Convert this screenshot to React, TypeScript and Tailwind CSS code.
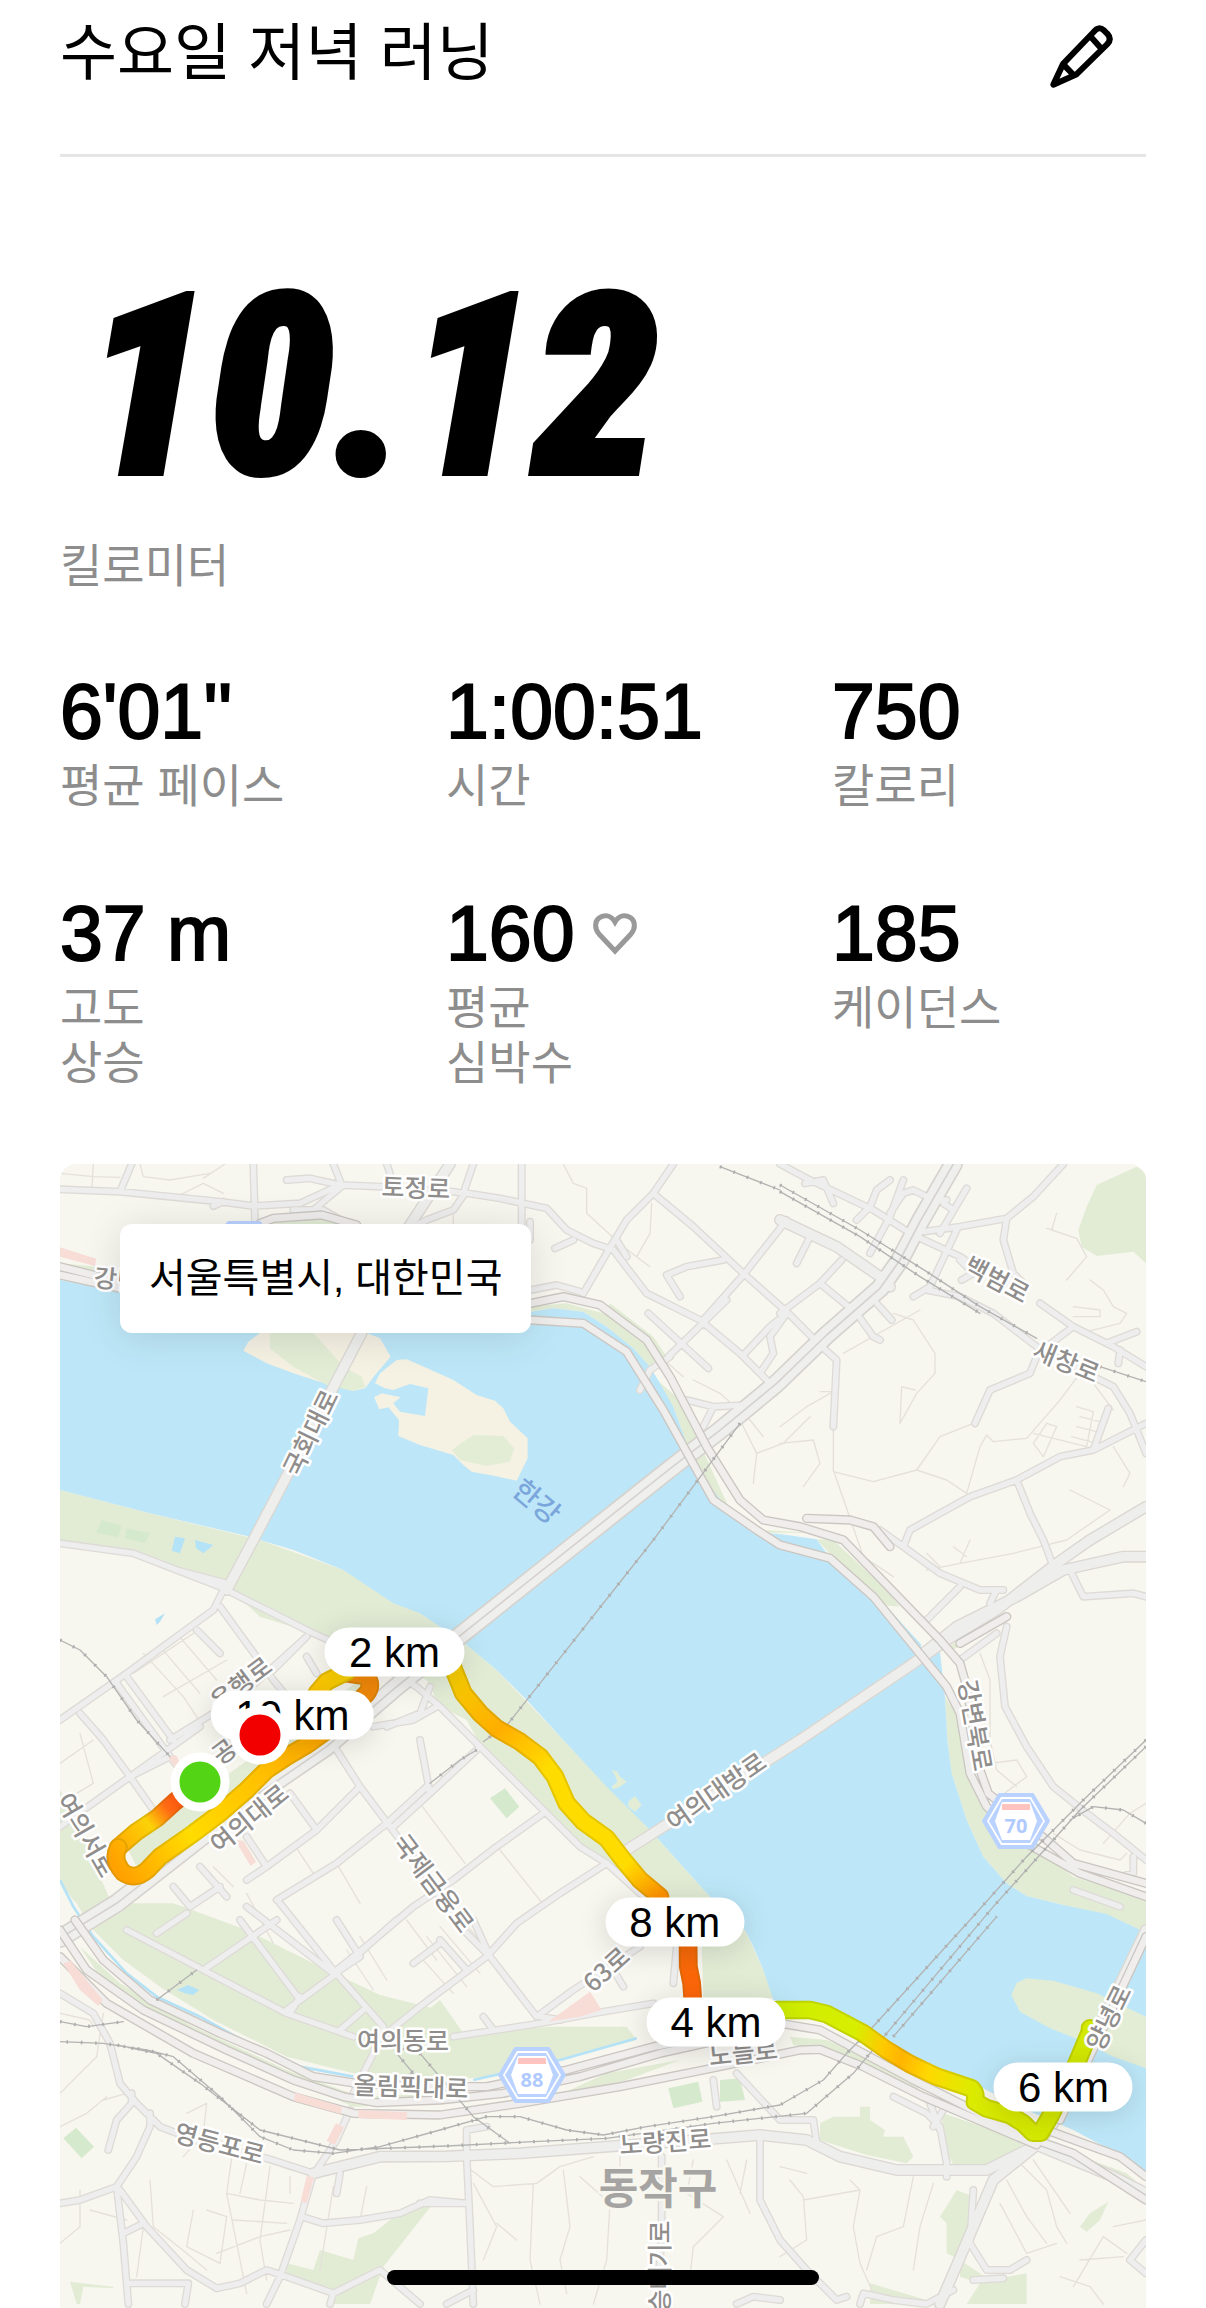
type Stat = { value: string; label: string[]; heart?: boolean };

const stats: Stat[] = [
  { value: "6'01''", label: ["평균 페이스"] },
  { value: "1:00:51", label: ["시간"] },
  { value: "750", label: ["칼로리"] },
  { value: "37 m", label: ["고도", "상승"] },
  { value: "160", label: ["평균", "심박수"], heart: true },
  { value: "185", label: ["케이던스"] },
];

const KR = "font-['Liberation_Sans','Noto_Sans_CJK_KR',sans-serif]";

// Map shapes are in thirds of a pixel, labels in whole pixels.
const water = [
  "M0 360L180 392L800 470L1413 455L1480 445L1570 455L1640 500L1720 565L1770 620L1800 670L1840 740L1880 850L1930 960L1960 1010L2020 1060L2100 1118L2160 1122L2270 1138L2300 1180L2390 1270L2460 1335L2585 1462L2640 1475L2655 1610L2662 1740L2675 1840L2720 1980L2770 2090L2840 2170L2900 2208L3010 2235L3140 2262L3258 2318V3050L3170 2980L3040 2910L2900 2850L2760 2780L2560 2720L2430 2630L2260 2550L2140 2520L2110 2430L2080 2360L2055 2310L1950 2210L1770 2010L1640 1880L1510 1740L1400 1620L1310 1530L1220 1455L1080 1360L1000 1330L850 1230L700 1170L600 1140L570 1130L270 1060L0 990Z",
];

const parks = [
  "M0 990L270 1060L600 1140L850 1230L1080 1360L1220 1455L1310 1530L1510 1740L1770 2010L1950 2210L2055 2310L2110 2430L2150 2515L1930 2515L1925 2350L1800 2270L1660 2130L1560 2060L1440 1930L1270 1770L1220 1680L1140 1640L1100 1560L930 1480L760 1420L600 1370L500 1280L360 1230L220 1180L0 1150Z",
  "M0 310L110 320L180 345V385L0 350Z",
  "M600 180L785 168L880 190V210H600Z",
  "M1413 455L1480 445L1570 455L1640 500L1720 565L1770 620L1820 590L1780 530L1650 430L1630 460L1520 430L1413 440Z",
  "M1780 650L1840 740L1880 850L1960 1010L2020 1060L2100 1118H2260L2100 1110L2010 1050L1860 720Z",
  "M2270 1138L2320 1140L2480 1290L2520 1340L2460 1335L2390 1270Z",
  "M2670 1475L2830 1380L2835 1372L2815 1370L2665 1460Z",
  "M2655 1610L2700 1680L2720 1820L2780 1960L2900 2040L3040 2150L3258 2220V2318L3010 2235L2900 2208L2840 2170L2770 2090L2720 1980L2675 1840L2662 1740Z",
  "M3258 40L3230 20L3110 75L3080 140L3055 210L3065 260L3110 288L3220 275L3258 310Z",
  "M2145 710L2160 640L2210 615L2190 660L2150 710Z",
  "M340 2230L560 2310L760 2410L960 2505L1140 2550L1180 2610L1100 2740H880L680 2690L460 2580L300 2480L190 2400L90 2300L50 2230Z",
  "M0 1890L40 1960L100 2100L150 2220L110 2290L40 2220L0 2170Z",
  "M1020 2620L1140 2520L1210 2620L1470 2600L1700 2600L1730 2640L1500 2700L1300 2750L1000 2770L960 2700Z",
  "M200 2060L900 1560L940 1570L880 1660L240 2140Z",
  "M60 2360L180 2470L400 2600L680 2730L900 2810L1120 2800V2830L880 2840L600 2720L260 2570L120 2450Z",
  "M1530 2790L1640 2740L1860 2700L1700 2760L1540 2800Z",
  "M2190 2630L2300 2640L2420 2690L2580 2780L2560 2800L2420 2730L2300 2680L2200 2655Z",
  "M2280 2890L2320 2870L2400 2870L2400 2840L2430 2840L2430 2880L2475 2910L2470 2930L2530 2930L2560 2990L2540 3010L2420 2985L2280 2940Z",
  "M2650 2860L2900 2945L2830 3000L2770 3020L2680 3015L2640 2930Z",
  "M2960 2950L3200 3040L3258 3090L3100 3040L2980 2980Z",
  "M2640 3170L2690 3090L2740 3110L2740 3200L2700 3300L2660 3280L2660 3190Z",
  "M2700 3300L2790 3360L2900 3340L2900 3432H2720L2760 3370L2700 3350Z",
  "M2430 3370L2600 3420V3432H2430Z",
  "M680 3310L760 3330L780 3270L880 3300L895 3235L940 3220L1040 3140L1120 3130L970 3320L930 3432H820L815 3405L680 3355Z",
  "M30 3365L160 3380V3385L70 3380L60 3432H50Z",
  "M3060 3200L3090 3160L3145 3125L3120 3180L3080 3215Z",
];

const lawns = [
  "M10 2935L48 2903L102 2960L65 2995Z",
  "M1825 2785L1915 2765L1927 2825L1840 2845Z",
  "M1980 2760L2040 2755L2055 2820L1980 2825Z",
  "M1290 1915L1335 1885L1378 1940L1340 1975Z",
  "M125 1080L185 1098L175 1132L108 1118Z",
  "M200 1105L270 1120L255 1150L195 1135Z",
];

const sands = [
  "M550 572L565 545L600 519L800 470L920 519L960 535L992 590L945 645L915 685L880 692L800 672L700 640L620 610Z",
  "M945 670L960 640L1010 600L1040 598L1080 615L1180 660L1250 705L1305 722L1330 745L1350 785L1403 835V895L1370 962L1290 945L1235 935L1210 915L1180 885L1080 855L1015 828L1017 780L985 742L958 748L942 712L965 700L1022 712L1000 730L1020 755L1095 768L1105 685L1050 672L1000 690L975 685Z",
];

const islets = [
  "M630 505L760 519L815 580L850 620L905 650L916 680L880 693L800 675L700 620L630 565Z",
  "M1175 870L1240 825L1330 828L1362 865L1350 905L1280 918L1200 900Z",
  "M2854 2505L2870 2468L2900 2455L2980 2462L3110 2500L3258 2570V2725L3160 2690L3060 2640L2970 2605L2880 2555Z",
  "M1655 1830L1672 1835L1680 1850L1700 1865L1680 1880L1660 1888L1655 1880L1672 1865L1665 1845Z",
  "M1705 1925L1725 1908L1745 1935L1725 1955L1705 1940Z",
];

const ponds = [
  "M345 1130L375 1135L360 1180L335 1172Z",
  "M405 1140L460 1155L430 1180L408 1165Z",
  "M285 1378L315 1360L300 1385L290 1395Z",
  "M350 2490L385 2475L418 2490L400 2505L375 2500Z",
];

const pinks = [
  "M0 262L108 296L105 318L0 290Z",
  "M1465 2585L1590 2495L1625 2550L1560 2570Z",
  "M10 2410L32 2402L128 2520L115 2538L60 2490Z",
  "M706 2798L846 2840L842 2862L702 2822Z",
  "M895 2850L1042 2857L1040 2880L895 2874Z",
  "M828 2890L852 2902L824 2955L800 2942Z",
  "M740 3048L762 3052L740 3130L722 3124Z",
  "M525 2040L550 2042L588 2105L572 2118Z",
  "M325 1792L348 1785L372 1830L355 1840Z",
];

const thin = [
  "M0 40L100 50L180 52M100 12L95 100M240 12L250 50L330 60L450 40M360 105L430 70L490 100M495 12L430 55",
  "M1510 12L1540 70L1580 85V160L1690 260L1770 320M1775 130L1770 220L1730 290M1180 130V200",
  "M1610 520L1690 570L1740 620M1690 320L1740 380M1790 580L1870 650M1900 660L1980 700L2070 780L2110 830",
  "M2040 780L2090 880L2170 850L2250 770M2090 880L2080 970",
  "M2160 800L2240 740L2320 695H2280M2160 850L2260 840L2280 910L2230 980",
  "M2320 800V930L2410 1190L2500 1250M2320 935L2440 965L2570 930L2640 830L2740 790M2570 930L2660 960L2720 1000L2760 860L2780 825L2800 845L2900 835L3000 720L3060 640",
  "M2500 460L2560 480L2625 580V640L2570 700L2520 790L2525 680L2565 690M2350 580L2580 450",
  "M3050 740L3100 755L3080 860L2920 820M3060 770L3140 790M3050 800L3130 820M3035 830L3110 850M2960 790L2990 800L2950 890L2920 850Z",
  "M2990 160L2975 210L3050 235L3080 290L3020 360M2960 205L2980 210M3090 360L3130 390L3160 440L3200 460L3180 490L3080 515M3040 440L3120 450V470H3040",
  "M3100 670L3160 750M3160 860L3210 940L3190 980M3030 990L3150 1050L3020 1140L2860 1180L2700 1210L2600 1230",
  "M2700 1210L2730 1140M2600 1180L2640 1220M2680 1160L2720 1190",
  "M2790 1810L2870 1800L2900 1850L2820 1910M2760 1480L2790 1560V1740L2810 1830L2870 1880",
  "M2980 2020L3060 2070L3180 2100L3200 2080M3130 2050L3210 1960L3258 1930",
  "M250 1480L370 1610L430 1700M300 1460L420 1600M350 1420L470 1560M220 1540L400 1420M310 1610L500 1500",
  "M0 1930L100 1870L60 1720M0 1810L100 1740M560 2200L640 2350M700 2050L760 2140",
  "M0 2800L60 2740L110 2690L130 2560M140 2810L80 2860L0 2900M130 2820L200 2800",
  "M60 3090V3200L0 3250M90 3150L200 3180M250 3200L230 3350M270 3060L280 3200L380 3280L440 3330",
  "M380 2860L440 2830L430 2920L370 2990M430 2920L520 2960L600 2990L690 3030M520 2960L500 3100L530 3250L560 3400",
  "M500 3100L600 3120L700 3130M520 3180L680 3190M440 3150L500 3170L480 3310L380 3260L400 3150M470 3280L600 3230L690 3210",
  "M560 3010L540 3100M630 3020L600 3240L620 3360M690 3050V3100M820 3080L780 3330M920 3080L900 3180",
  "M1220 3020L1300 3080L1430 3070L1500 3020L1600 2990M1420 3070L1410 3300L1440 3432M1510 3030L1530 3200L1500 3300L1520 3400",
  "M1560 3050L1650 3130L1640 3300L1600 3432M1680 2980V3040M1240 3070L1310 3200L1270 3300M1310 3190L1370 3240",
  "M1900 3000L1880 3100L1990 3170L1900 3260L1890 3350M2000 3000L2070 3160M2060 3000L2040 3100",
  "M2160 3020L2240 3040M2190 3060L2230 3110L2240 3240L2160 3290M2230 3120L2400 3090L2380 3200L2400 3310L2440 3400",
  "M2400 3090L2370 3060M2560 3050L2530 3200L2450 3230L2420 3330M2620 3070L2580 3200L2560 3330",
  "M2880 3010L2960 3090L2990 3200L3020 3250M2840 3060L2900 3170L2960 3250M2920 3000L3030 3160M2820 3130L2900 3280L2990 3250",
  "M3040 3380L3130 3230L3200 3280M3000 3350L3090 3380L3130 3432M3060 3300L3190 3290M3160 3200L3258 3180",
  "M1100 2330L1220 2480M1140 2300L1260 2440M1190 2260L1300 2390M1080 2390L1180 2500",
  "M900 2330L980 2460M860 2370L940 2490M1040 2280L1130 2400",
  "M1080 1930L1215 2110M1320 2070L1455 2240",
  "M830 2110L900 2230M460 2120L520 2180M0 2560L90 2580L100 2600",
];

const minor = [
  "M0 88L180 95L330 110L480 125L580 138L720 130L840 75L965 80M180 95L215 12M580 12L585 190M460 138L490 125M680 60L750 55L840 75M820 12L845 75M980 12L990 40",
  "M700 150L790 150L860 190M760 150L850 75M1080 90L1180 95L1210 100L1240 12M1040 210L1100 180L1180 150L1215 100M1385 12V190M1410 185V240",
  "M1210 98L1320 115L1460 145L1520 210L1600 250L1660 270L1760 400L1920 480L2040 580L2140 680M1485 265L1540 240",
  "M1413 390L1490 375L1560 395M1570 400L1640 280L1700 180L1780 100L1840 12M1670 240L1700 290M1780 100L1900 200L2050 340L2185 460L2280 555L2330 600L2320 800",
  "M1990 300L1880 320L1820 345L1860 410M1930 480L2050 345L2180 180M1825 590L2000 420M1765 460L1945 625M2050 585L2130 500L2180 460M2100 640L2140 580L2130 530L2180 460",
  "M1830 590L1770 630L1740 690M1880 720L1960 740L2060 735L2100 700M1960 740L1930 800",
  "M2160 460L2280 370L2345 300M2210 310L2250 230M2280 370L2390 460L2440 530L2460 540M2430 280L2490 170L2530 60M2450 430L2495 480",
  "M2320 130L2290 60L2235 70M2430 140L2450 90L2490 60M2490 160L2530 100L2560 90L2620 120L2660 120M2720 85L2640 220M2650 130L2680 150",
  "M2160 12L2240 55L2440 150L2560 225L2700 290L2730 310M2390 180L2420 150M2590 215L2700 200L2840 175L2920 110L3010 12M2840 175L2830 240L2860 340L2890 370",
  "M2610 380L2690 210M2560 410L2610 380M2700 300L2740 340L2705 360M2940 430L3040 500L3160 560L3258 620M3040 500L2960 560M3140 550L3230 515M3180 570L3175 610",
  "M2600 390L2700 410L2800 460L2930 560L3080 640L3160 680L3210 760L3258 880M2930 590L2910 640L2790 690L2745 790M3100 870L3145 745M3258 790L3100 870L3000 890L2870 960L2730 1010L2640 1060L2550 1110L2530 1160",
  "M2870 960L2910 1060L2950 1140L2980 1220M2460 1110L2530 1160L2640 1240L2760 1290L2830 1290M2700 1280L2600 1380M2790 1330L2810 1290",
  "M3035 1240L3070 1310L3220 1300L3258 1310M2700 1500L2810 1420M2840 1400L2820 1490L2835 1640L2900 1760L2980 1880L3080 1960L3160 2020L3258 2100",
  "M3220 2090V2140L3180 2150M3040 2190L3180 2240",
  "M0 1150L220 1180L480 1280L620 1350L760 1420L850 1460L1000 1540L1070 1580L1140 1640L1240 1740L1360 1860L1460 1960L1560 2060L1640 2110L1740 2200L1820 2260L1850 2360L1840 2470",
  "M350 1230L500 1270M0 1680L200 1540L460 1350L490 1290M480 1340L640 1560L690 1620M410 1410L480 1480M330 1740L540 1610L740 1430",
  "M60 1660L130 1740L210 1850L280 1950M210 1850L330 1790M170 1570L330 1790L400 1880M200 1550L340 1740M0 2000L420 1700",
  "M640 1530L740 1430M740 1490L770 1540M850 1460L920 1560M830 1770L900 1880L990 2000L1080 2120L1200 2300L1290 2390",
  "M900 1880L770 2010L620 2120L560 2160M770 2010L690 1900M980 1990L830 2110L650 2220M420 2120L500 2210M340 2180L390 2240L480 2180",
  "M620 2120L560 2030M1000 2000L1110 1900L1250 1770M1080 1740L1110 1900M970 2000L1100 1880M940 1700L1060 1680L1130 1640M1110 1580L1080 1660L980 1700",
  "M1450 1960L1310 2060L1180 2160L1060 2240L930 2350L830 2430M1640 2110L1500 2200L1370 2290L1280 2390L1080 2540L980 2620",
  "M660 2230L820 2430L970 2600L940 2680L880 2800M560 2240L820 2440M830 2280L900 2390M900 2390L840 2430M540 2280L720 2520M680 2550L830 2440L1010 2280",
  "M200 2310L430 2430L680 2560L880 2630M290 2320L380 2260M430 2430L650 2280M720 2510L690 2560M840 2610L910 2550M1060 2410L1140 2350",
  "M1290 2390L1430 2570M1430 2570L1540 2490L1740 2360M1140 2340L1220 2430M1270 2570L1300 2610M1660 2430L1690 2480",
  "M1180 2630L1440 2590L1600 2560L1780 2530M1440 2570L1500 2580M1240 2280L1290 2390",
  "M0 2500L100 2560L150 2650L180 2770L230 2830L300 2900L430 2950L620 2995L760 3040M215 2800V2830L170 2880L145 2970M270 2860V2900L230 2990L170 3080L60 3120L0 3130",
  "M170 3080L190 3250L205 3432M180 3090L260 3200L380 3330L470 3385L540 3370L620 3330L680 3350L820 3400L960 3330L1080 3432M205 3370H385L375 3432M190 3220L250 3190",
  "M760 3040L720 3180L660 3350L620 3432M725 3170L790 3190L900 3180L1020 3160L1110 3120L1220 3130M840 3040L830 3100M820 3400L810 3432M870 2850L830 2940L770 3030",
  "M1140 2990H1220L1230 3200L1240 3432M1220 2970V2910L1280 2900M1080 3130L1220 3130M1160 3432L1240 3390",
  "M1805 2990V3230L1790 3432M2100 2930V3120L2160 3240L2240 3330L2330 3420L2360 3410M1960 2760L1970 2840M2030 2740L2160 2880H2260L2270 2950",
  "M2030 3432L2080 3410L2160 3420M2400 3432L2410 3400L2500 3420L2600 3432L2680 3390M2740 3090L2730 3250L2780 3330L2850 3330L2900 3300M2740 3360L2830 3355",
  "M2500 2810L2600 2860L2640 2900L2660 3010V3050M2610 2830L2640 2910M2650 2850L2620 2900M3258 3240L3210 3300L3258 3340",
];

const major = [
  "M905 519L580 1140L500 1290",
  "M1700 2070L2220 1740L2560 1510L2660 1440L2810 1350L2990 1210L3090 1140L3258 1040",
  "M2590 1480L2690 1400L2870 1310L3010 1230L3190 1190H3258",
  "M3258 2310L2980 2890L2930 2955L2800 3060L2740 3200L2640 3432",
  "M1160 2989L1380 2980L1640 2960L1980 2935L2100 2925L2240 2940L2340 2990L2510 3030L2780 3030L2930 2955L3160 3050L3258 3100",
  "M760 3040L960 2990L1160 2989",
  "M1040 210L1170 12",
  "M2160 180L2330 260L2460 350L2490 380",
];

// Mapo bridge and the avenues at both of its ends
const avenue = [
  "M2680 12L2580 185L2520 300L2460 385L2300 525L2150 670L1975 815L1870 895L1800 950L1190 1435L1000 1588L800 1760L560 1925L170 2230L0 2335",
];

const highway = [
  "M0 320L180 365M1413 430L1510 410L1620 435L1760 540L1830 650L1940 860L2040 1020L2110 1080L2220 1100L2350 1140L2640 1440L2700 1510L2720 1580L2760 1830L2785 1900L2960 2040L3040 2110L3258 2170",
  "M0 345L180 385M1413 480L1570 490L1700 575L1810 750L1960 1020L2090 1110L2160 1155L2310 1195L2440 1310L2660 1580L2700 1660L2730 1840L2780 1940L2900 2050L3060 2140L3258 2210",
  "M2240 1075L2370 1080L2440 1100L2490 1160M2700 1450L2840 1370",
  "M600 190L640 175L785 165L890 195",
  "M45 2280L130 2400L270 2520L480 2620L620 2680L760 2750L890 2770L1140 2780L1280 2780L1520 2730L1780 2660L2160 2590L2280 2610L2560 2760L2720 2840L2900 2930L3040 2980L3258 3120",
  "M0 2310L80 2430L250 2550L500 2670L700 2760L850 2810L950 2828L1140 2820L1330 2800L1560 2750L1800 2680L1980 2640L2160 2600",
  "M0 2390L140 2530L400 2680L700 2810L880 2860L1140 2865L1380 2830L1680 2780L1930 2730L2220 2670L2280 2668L2410 2720L2590 2810L2930 2955",
  "M2960 2910L3180 2990L3258 3050M3258 2330L3000 2880",
];

const rails = [
  "M2040 790L1780 1140L1345 1690L1270 1745M1250 1770L1200 1800L1110 1870",
  "M3258 1740L3070 1920L2960 2030L2900 2090L2730 2280L2430 2610L2360 2680L2290 2760L2160 2835L1960 2870L1760 2900L1630 2925L1520 2910L1380 2870L1280 2870L1140 2910L960 2960L820 2980L700 2970L600 2930L480 2810L340 2690L260 2670L130 2650L0 2645",
  "M3258 1760L3060 1950L2980 2040L2800 2240L2480 2620L2380 2740L2240 2860L1960 2890L1640 2935L1420 2945L1160 2958L840 2970L600 2910L420 2770L290 2680L170 2655",
  "M2500 2630L2810 2270M1080 2680L1240 2870L1350 2950M290 2520L410 2430M980 2760L1060 2740L1010 2680L1070 2640",
  "M2160 75L2400 210L2600 335L2760 440L2930 535M3120 620L3258 665M1980 20L2160 90M2160 95L2400 230L2580 350L2760 460",
  "M0 1440L60 1470L140 1550L230 1680L330 1790M0 2585L80 2600L190 2585M3258 1990L3190 1950L3100 1940L3030 1980",
];

const mapLabels = [
  { text: "토정로", x: 356, y: 22, r: 2 },
  { text: "강변북로", x: 80, y: 116, r: 6 },
  { text: "국회대로", x: 249, y: 268, r: -64 },
  { text: "백범로", x: 938, y: 114, r: 28 },
  { text: "새창로", x: 1007, y: 196, r: 22 },
  { text: "은행로", x: 180, y: 518, r: -37 },
  { text: "공", x: 163, y: 586, r: -37 },
  { text: "여의대로", x: 188, y: 653, r: -39 },
  { text: "여의서로", x: 28, y: 670, r: 60 },
  { text: "국제금융로", x: 375, y: 718, r: 53 },
  { text: "63로", x: 545, y: 804, r: -42 },
  { text: "여의대방로", x: 655, y: 626, r: -35 },
  { text: "강변북로", x: 917, y: 561, r: 80 },
  { text: "여의동로", x: 343, y: 875, r: 0 },
  { text: "올림픽대로", x: 351, y: 921, r: 2 },
  { text: "영등포로", x: 160, y: 978, r: 15 },
  { text: "노량진로", x: 605, y: 976, r: -4 },
  { text: "노들로", x: 683, y: 887, r: -6 },
  { text: "장승배기로", x: 598, y: 1114, r: -90 },
];

const route = [
  { id: "start", d: "M420 1866L345 1925L290 1975L230 2015L175 2062", from: [400, 1880], to: [175, 2062], stops: [["0", "#f23a0a"], ["0.35", "#ff6a13"], ["0.6", "#fbd208"], ["1", "#ffab00"]] },
  { id: "turn", d: "M175 2062Q155 2100 190 2138Q225 2162 262 2130L300 2090L400 2020L480 1960L560 1890L620 1830L680 1790L740 1755L830 1690L920 1600Q940 1575 918 1548L860 1540", from: [175, 2130], to: [920, 1570], stops: [["0", "#ffa200"], ["0.25", "#ffdc00"], ["0.5", "#ffc400"], ["0.75", "#ffac00"], ["1", "#f58a0a"]] },
  { id: "loop", d: "M770 1600L800 1565L860 1535", from: [770, 1600], to: [900, 1535], stops: [["0", "#ffc800"], ["1", "#fbd800"]] },
  { id: "riverside", d: "M1178 1520L1210 1600L1260 1660L1310 1705L1380 1745L1440 1790L1485 1850L1520 1930L1570 1985L1640 2035L1690 2100L1740 2160L1800 2210", from: [1178, 1520], to: [1800, 2210], stops: [["0", "#f5cf00"], ["0.25", "#ffae00"], ["0.45", "#ffdc00"], ["0.85", "#ffdc00"], ["1", "#ff9100"]] },
  { id: "climb", d: "M1884 2340L1885 2420L1895 2470L1899 2530", from: [1884, 2340], to: [1899, 2530], stops: [["0", "#f56a08"], ["1", "#ff650a"]] },
  { id: "east", d: "M2150 2550H2250L2300 2562L2410 2620L2480 2670L2550 2712L2630 2750L2735 2785Q2750 2800 2745 2825L2780 2845L2850 2865L2890 2890L2918 2918H2942L2970 2870L3050 2710L3090 2615V2605", from: [2150, 2550], to: [3090, 2800], stops: [["0", "#cdee00"], ["0.25", "#d8ee00"], ["0.35", "#ffc800"], ["0.41", "#ffb400"], ["0.5", "#ffd800"], ["0.65", "#dcec00"], ["1", "#d0e800"]] },
];

function Paths({ list, fill }: { list: string[]; fill: string }) {
  return <path d={list.join("")} fill={fill} />;
}

function Lines({ list, stroke, width, dash }: { list: string[]; stroke: string; width: number; dash?: string }) {
  return (
    <path
      d={list.join("")}
      fill="none"
      stroke={stroke}
      strokeWidth={width}
      strokeDasharray={dash}
      strokeLinecap={dash ? "butt" : "round"}
      strokeLinejoin="round"
    />
  );
}

function RoadLabel({ text, x, y, r }: { text: string; x: number; y: number; r: number }) {
  return (
    <text
      transform={`translate(${x} ${y}) rotate(${r})`}
      textAnchor="middle"
      dominantBaseline="central"
      paintOrder="stroke"
      strokeLinejoin="round"
      className="fill-[#908e8c] stroke-white stroke-[5px] font-['Noto_Sans_CJK_KR',sans-serif] text-[25px] font-medium"
    >
      {text}
    </text>
  );
}

function Shield({ x, y, num }: { x: number; y: number; num: string }) {
  return (
    <g transform={`translate(${x} ${y})`}>
      <path d="M-17 -27H17L33 0L17 27H-17L-33 0Z" fill="#b9d2ff" stroke="#b9d2ff" strokeWidth="2" strokeLinejoin="round" />
      <path d="M-15 -24H15L29 0L15 24H-15L-29 0Z" fill="#fff" />
      <path d="M-14 -22H14L27 0L14 22H-14L-27 0Z" fill="#b9d2ff" />
      <path d="M-14 -19H14L21 0L14 19H-14L-21 0Z" fill="#fff" />
      <path d="M-14 -17H14V-11H-14Z" fill="#ffc4c0" />
      <text y="4" textAnchor="middle" dominantBaseline="central" className="fill-[#b0caff] font-['Open_Sans',sans-serif] text-[20px] font-bold">
        {num}
      </text>
    </g>
  );
}

function MapArt() {
  return (
    <svg viewBox="0 0 1086 1144" className="block w-full" aria-hidden="true">
      <defs>
        {route.map((s) => (
          <linearGradient key={s.id} id={s.id} gradientUnits="userSpaceOnUse" x1={s.from[0]} y1={s.from[1]} x2={s.to[0]} y2={s.to[1]}>
            {s.stops.map(([o, c]) => (
              <stop key={o} offset={o} stopColor={c} />
            ))}
          </linearGradient>
        ))}
      </defs>
      <rect width="1086" height="1144" fill="#f7f6ef" />
      <g transform="translate(0 -4) scale(0.3333333)">
        <Paths list={parks} fill="#e2ecd5" />
        <Paths list={water} fill="#bde7f8" />
        <Paths list={sands} fill="#f5f1e3" />
        <Paths list={islets} fill="#e3edd6" />
        <Paths list={lawns} fill="#d5e9cd" />
        <Paths list={ponds} fill="#b4e2f7" />
        <path d="M0 2160L40 2240L100 2330L200 2440L290 2510L420 2570L600 2670L720 2720L880 2750M1240 2760L1500 2700L1730 2635" fill="none" stroke="#b4e2f7" strokeWidth="8" />
        <path d="M2480 1350L2580 1460M1780 650L1900 930L1990 1040" fill="none" stroke="#bde7f8" strokeWidth="14" />
        <Lines list={thin} stroke="#e5e1da" width={4} />
        <Lines list={minor} stroke="#dedbd7" width={24} />
        <Lines list={major} stroke="#dbd7d2" width={36} />
        <Lines list={avenue} stroke="#d6d2cd" width={58} />
        <Lines list={minor} stroke="#eeeeee" width={16} />
        <Lines list={major} stroke="#eeeeed" width={28} />
        <Lines list={avenue} stroke="#efefee" width={48} />
        <Lines list={avenue} stroke="#d6d2cd" width={5} />
        <Lines list={highway} stroke="#cbc6c1" width={28} />
        <Lines list={highway} stroke="#efeeed" width={20} />
        <Paths list={pinks} fill="#f8dcd6" />
        <Lines list={rails} stroke="#b3b3b2" width={4} />
        <Lines list={rails} stroke="#aeaeae" width={10} dash="5 38" />
      </g>
      {mapLabels.map((l) => (
        <RoadLabel key={`${l.text}${l.x}`} {...l} />
      ))}
      <text
        transform="translate(478 336) rotate(40)"
        textAnchor="middle"
        dominantBaseline="central"
        className="fill-[#7ba6db] font-['Noto_Sans_CJK_KR',sans-serif] text-[28px] font-medium"
      >
        한강
      </text>
      <text
        x="598"
        y="1021"
        textAnchor="middle"
        dominantBaseline="central"
        paintOrder="stroke"
        className="fill-[#a5a4a2] stroke-[#f7f6ef] stroke-[5px] font-['Noto_Sans_CJK_KR',sans-serif] text-[43px] font-bold"
      >
        동작구
      </text>
      <Shield x={956} y={657} num="70" />
      <Shield x={472} y={911} num="88" />
      <path d="M168 57H200L208 66H160Z" fill="#b9d2ff" />
      <g transform="translate(0 -4) scale(0.3333333)" fill="none" strokeLinecap="round" strokeLinejoin="round">
        {route.map((s) => (
          <g key={s.id}>
            <path d={s.d} stroke={`url(#${s.id})`} strokeWidth="56" />
            <path d={s.d} stroke="#7a6a00" strokeOpacity="0.2" strokeWidth="56" />
            <path d={s.d} stroke={`url(#${s.id})`} strokeWidth="44" />
          </g>
        ))}
      </g>
      <RoadLabel text="양녕로" x={1047} y={853} r={-64} />
    </svg>
  );
}

const pill =
  "absolute flex h-[49px] -translate-x-1/2 -translate-y-1/2 items-center justify-center whitespace-nowrap rounded-full bg-white px-6 font-['Liberation_Sans',sans-serif] text-[42px] leading-none shadow-[0_4px_30px_rgba(0,0,0,0.14)]";

const dot = "absolute size-[59px] -translate-x-1/2 -translate-y-1/2 rounded-full border-[9px] border-white";

function RunMap() {
  return (
    <section aria-label="러닝 경로" className="relative overflow-hidden rounded-t-2xl">
      <MapArt />
      <span className={`${pill} left-[30.8%] top-[42.7%]`}>2 km</span>
      <span className={`${pill} left-[21.4%] top-[48.2%]`}>10 km</span>
      <span className={`${pill} left-[56.6%] top-[66.3%]`}>8 km</span>
      <span className={`${pill} left-[60.4%] top-[75%]`}>4 km</span>
      <span className={`${pill} left-[92.4%] top-[80.7%]`}>6 km</span>
      <span className={`${dot} left-[12.9%] top-[54%] bg-[#53d516]`} />
      <span className={`${dot} left-[18.4%] top-[49.9%] bg-[#f20000]`} />
      <div className="absolute inset-x-0 top-0 flex p-[60px]">
        <p className={`${KR} rounded-xl bg-white px-[29px] py-[30px] text-[40px] leading-[49px] shadow-[0_4px_40px_rgba(0,0,0,0.12)]`}>
          서울특별시, 대한민국
        </p>
      </div>
    </section>
  );
}

function PencilIcon() {
  return (
    <svg viewBox="50 35 206 206" className="size-[69px]" fill="none" stroke="currentColor" strokeWidth="18" strokeLinejoin="round" aria-hidden="true">
      <path d="M69 222L98 160L190 64Q204 46 220 60L231 71Q244 86 230 101L137 192Z" />
      <path d="M180 78L212 114M97 160L132 196" />
    </svg>
  );
}

function HeartIcon() {
  return (
    <svg viewBox="0 0 46 43" className="h-[43px] w-[46px] text-[#999]" fill="none" stroke="currentColor" strokeWidth="5" strokeLinejoin="miter" aria-hidden="true">
      <path d="M23 39L7 22C2 16 3 9 7 6C12 2 19 3 23 10C27 3 34 2 39 6C43 9 44 16 39 22Z" />
    </svg>
  );
}

export default function App() {
  return (
    <main className="h-screen overflow-hidden bg-white px-[60px] text-black">
      <header className="flex items-start justify-between border-b-[3px] border-[#e5e5e5] pt-[22px] pb-[63px]">
        <h1 className={`${KR} text-[62px] leading-[64px]`}>수요일 저녁 러닝</h1>
        <button type="button" aria-label="이름 편집" className="pr-[30px]">
          <PencilIcon />
        </button>
      </header>

      <section className="pt-[104px]">
        <p className="pl-[24px] font-['Roboto_Condensed','Roboto',sans-serif] text-[252px] leading-[252px] font-black italic [-webkit-text-stroke:6px_black]">
          10.12
        </p>
        <p className={`${KR} pt-[20px] text-[46px] leading-[66px] text-[#8d8d8d]`}>킬로미터</p>
      </section>

      <dl className="grid grid-cols-3 gap-x-18 gap-y-[71px] pt-[64px] pb-[73px]">
        {stats.map((s) => (
          <div key={s.label.join(" ")} className="flex flex-col-reverse justify-end">
            <dt className={`${KR} text-[46px] leading-[55px] text-[#8d8d8d]`}>
              {s.label.map((line) => (
                <span key={line} className="block">
                  {line}
                </span>
              ))}
            </dt>
            <dd className="flex items-center gap-[18px] font-['Liberation_Sans',sans-serif] text-[77px] leading-[96px] [-webkit-text-stroke:2px_black]">
              {s.value}
              {s.heart && <HeartIcon />}
            </dd>
          </div>
        ))}
      </dl>

      <RunMap />
      <div className="fixed inset-x-0 bottom-[23px] flex justify-center">
        <div className="h-[15px] w-[432px] rounded-full bg-black" />
      </div>
    </main>
  );
}
